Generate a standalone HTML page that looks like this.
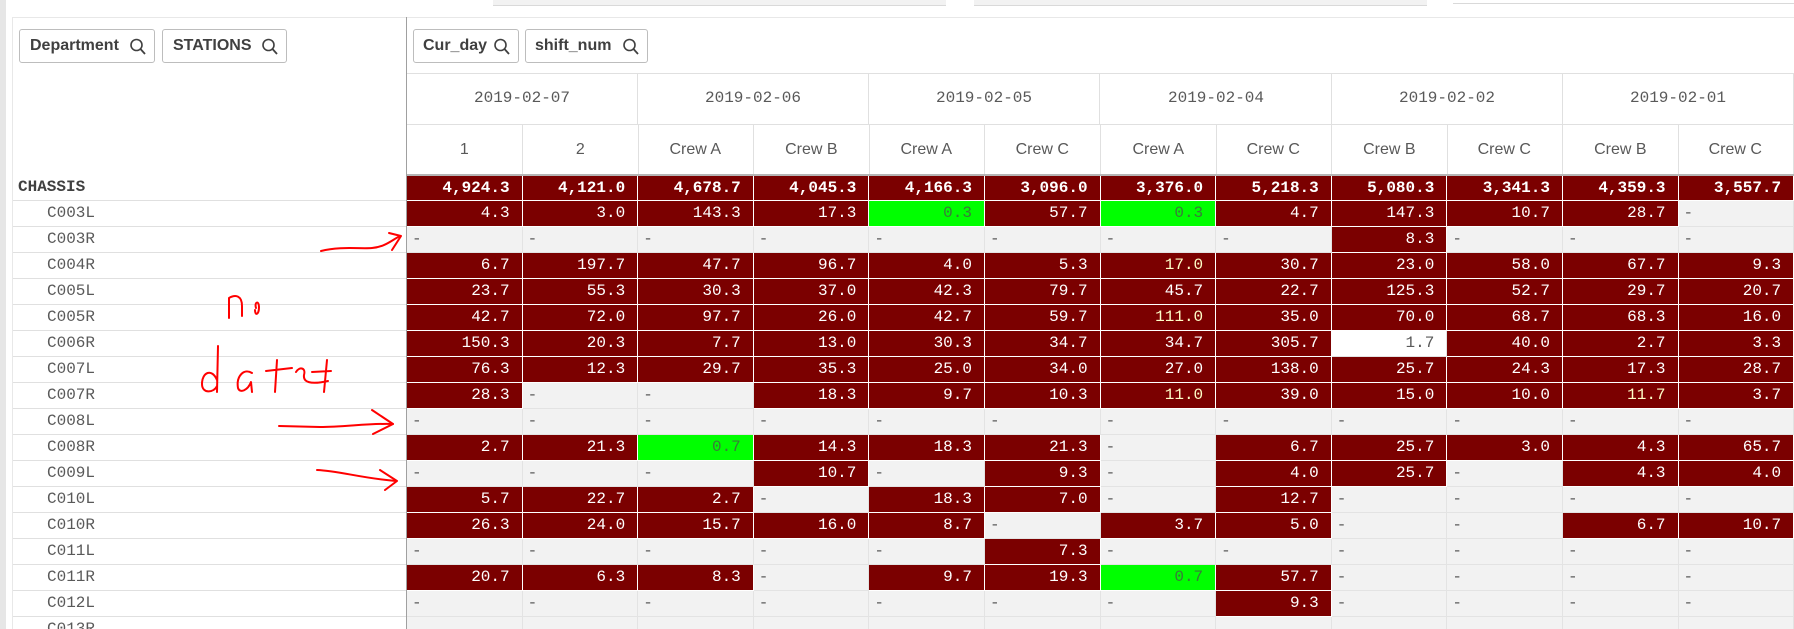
<!DOCTYPE html>
<html><head><meta charset="utf-8"><style>
*{box-sizing:border-box;margin:0;padding:0}
html,body{width:1794px;height:629px;overflow:hidden}
body{background:#fff;position:relative;font-family:"Liberation Mono","DejaVu Sans Mono",monospace;color:#595959}
.strip{position:absolute;left:0;top:0;width:6px;height:629px;background:#e6e6e6}
.bar{position:absolute;top:0;height:6px;background:#f2f2f2;border-bottom:1px solid #d9d9d9}
.panel{position:absolute;left:12px;top:17px;width:1782px;height:612px;border-top:1px solid #e8e8e8;border-left:1px solid #e8e8e8}
.vsep{position:absolute;left:406px;top:17px;width:1px;height:612px;background:#a0a0a0;z-index:2}
.btn{position:absolute;top:29px;height:34px;border:1px solid #bdbdbd;border-radius:3px;font-family:"Liberation Sans",sans-serif;font-weight:bold;font-size:16px;color:#404040;line-height:32px;padding-left:10px}
.btn svg{position:absolute;right:8px;top:8px}
.hline{position:absolute;left:407px;width:1387px;height:1px;background:#e0e0e0}
.dh{position:absolute;top:73px;height:51px;width:231px;border-right:1px solid #e0e0e0;text-align:center;line-height:51px;font-size:16px}
.ch{position:absolute;top:124px;height:51px;width:115.6px;border-right:1px solid #e0e0e0;text-align:center;line-height:51px;font-family:"Liberation Sans",sans-serif;font-size:16px;color:#595959}
.hdrline{position:absolute;left:407px;top:174px;width:1387px;height:2px;background:#b5b5b5}
.lbl{position:absolute;left:13px;width:393px;height:26px;border-bottom:1px solid #e0e0e0;line-height:25px;font-size:16px;padding-left:34px;color:#595959}
.lbl.b{font-weight:bold;padding-left:5px;color:#404040}
table{position:absolute;left:407px;top:176px;width:1387px;border-collapse:separate;border-spacing:0;table-layout:fixed}
td{height:26px;width:115.6px;border-right:1px solid #fff;border-bottom:1px solid #fff;background:#7b0000;color:#fff;text-align:right;padding:0 12px 0 0;font-size:16px;line-height:25px;white-space:nowrap;overflow:hidden}
td.e{background:#f2f2f2;color:#595959;text-align:left;padding-left:5px;border-color:#e3e3e3}
td.g{background:#00ff00;color:#3a7a3a}
td.w{background:#fff;color:#595959;border-color:#e3e3e3}
td.y{color:#ffffc8}
tr.t td{font-weight:bold;height:25px;line-height:24px}
</style></head><body>
<div class="strip"></div>
<div class="bar" style="left:493px;width:453px"></div>
<div class="bar" style="left:974px;width:453px"></div>
<div class="bar" style="left:1453px;width:341px;height:4px;background:#fff"></div>
<div class="panel"></div>
<div class="vsep"></div>

<div class="btn" style="left:19px;width:136px">Department<svg width="16" height="18" viewBox="0 0 16 18"><circle cx="6.5" cy="7" r="5.5" fill="none" stroke="#404040" stroke-width="1.6"/><path d="M10.5 11 L15 16" stroke="#404040" stroke-width="1.8"/></svg></div>
<div class="btn" style="left:162px;width:125px">STATIONS<svg width="16" height="18" viewBox="0 0 16 18"><circle cx="6.5" cy="7" r="5.5" fill="none" stroke="#404040" stroke-width="1.6"/><path d="M10.5 11 L15 16" stroke="#404040" stroke-width="1.8"/></svg></div>
<div class="btn" style="left:413px;width:106px;padding-left:9px">Cur_day<svg width="16" height="18" viewBox="0 0 16 18"><circle cx="6.5" cy="7" r="5.5" fill="none" stroke="#404040" stroke-width="1.6"/><path d="M10.5 11 L15 16" stroke="#404040" stroke-width="1.8"/></svg></div>
<div class="btn" style="left:525px;width:123px;padding-left:9px">shift_num<svg width="16" height="18" viewBox="0 0 16 18"><circle cx="6.5" cy="7" r="5.5" fill="none" stroke="#404040" stroke-width="1.6"/><path d="M10.5 11 L15 16" stroke="#404040" stroke-width="1.8"/></svg></div>

<div class="hline" style="top:73px"></div>
<div class="hline" style="top:124px"></div>
<div class="dh" style="left:407px">2019-02-07</div>
<div class="dh" style="left:638px">2019-02-06</div>
<div class="dh" style="left:869px">2019-02-05</div>
<div class="dh" style="left:1101px">2019-02-04</div>
<div class="dh" style="left:1332px">2019-02-02</div>
<div class="dh" style="left:1563px">2019-02-01</div>
<div class="ch" style="left:407px">1</div>
<div class="ch" style="left:523px">2</div>
<div class="ch" style="left:638px">Crew A</div>
<div class="ch" style="left:754px">Crew B</div>
<div class="ch" style="left:869px">Crew A</div>
<div class="ch" style="left:985px">Crew C</div>
<div class="ch" style="left:1101px">Crew A</div>
<div class="ch" style="left:1216px">Crew C</div>
<div class="ch" style="left:1332px">Crew B</div>
<div class="ch" style="left:1447px">Crew C</div>
<div class="ch" style="left:1563px">Crew B</div>
<div class="ch" style="left:1678px">Crew C</div>
<div class="hdrline"></div>

<div class="lbl b" style="top:175px">CHASSIS</div>
<div class="lbl" style="top:201px">C003L</div>
<div class="lbl" style="top:227px">C003R</div>
<div class="lbl" style="top:253px">C004R</div>
<div class="lbl" style="top:279px">C005L</div>
<div class="lbl" style="top:305px">C005R</div>
<div class="lbl" style="top:331px">C006R</div>
<div class="lbl" style="top:357px">C007L</div>
<div class="lbl" style="top:383px">C007R</div>
<div class="lbl" style="top:409px">C008L</div>
<div class="lbl" style="top:435px">C008R</div>
<div class="lbl" style="top:461px">C009L</div>
<div class="lbl" style="top:487px">C010L</div>
<div class="lbl" style="top:513px">C010R</div>
<div class="lbl" style="top:539px">C011L</div>
<div class="lbl" style="top:565px">C011R</div>
<div class="lbl" style="top:591px">C012L</div>
<div class="lbl" style="top:617px">C013R</div>

<table>
<tr class="t"><td>4,924.3</td><td>4,121.0</td><td>4,678.7</td><td>4,045.3</td><td>4,166.3</td><td>3,096.0</td><td>3,376.0</td><td>5,218.3</td><td>5,080.3</td><td>3,341.3</td><td>4,359.3</td><td>3,557.7</td></tr>
<tr><td>4.3</td><td>3.0</td><td>143.3</td><td>17.3</td><td class="g">0.3</td><td>57.7</td><td class="g">0.3</td><td>4.7</td><td>147.3</td><td>10.7</td><td>28.7</td><td class="e">-</td></tr>
<tr><td class="e">-</td><td class="e">-</td><td class="e">-</td><td class="e">-</td><td class="e">-</td><td class="e">-</td><td class="e">-</td><td class="e">-</td><td>8.3</td><td class="e">-</td><td class="e">-</td><td class="e">-</td></tr>
<tr><td>6.7</td><td>197.7</td><td>47.7</td><td>96.7</td><td>4.0</td><td>5.3</td><td class="y">17.0</td><td>30.7</td><td>23.0</td><td>58.0</td><td>67.7</td><td>9.3</td></tr>
<tr><td>23.7</td><td>55.3</td><td>30.3</td><td>37.0</td><td>42.3</td><td>79.7</td><td>45.7</td><td>22.7</td><td>125.3</td><td>52.7</td><td>29.7</td><td>20.7</td></tr>
<tr><td>42.7</td><td>72.0</td><td>97.7</td><td>26.0</td><td>42.7</td><td>59.7</td><td class="y">111.0</td><td>35.0</td><td>70.0</td><td>68.7</td><td>68.3</td><td>16.0</td></tr>
<tr><td>150.3</td><td>20.3</td><td>7.7</td><td>13.0</td><td>30.3</td><td>34.7</td><td>34.7</td><td>305.7</td><td class="w">1.7</td><td>40.0</td><td>2.7</td><td>3.3</td></tr>
<tr><td>76.3</td><td>12.3</td><td>29.7</td><td>35.3</td><td>25.0</td><td>34.0</td><td>27.0</td><td>138.0</td><td>25.7</td><td>24.3</td><td>17.3</td><td>28.7</td></tr>
<tr><td>28.3</td><td class="e">-</td><td class="e">-</td><td>18.3</td><td>9.7</td><td>10.3</td><td class="y">11.0</td><td>39.0</td><td>15.0</td><td>10.0</td><td class="y">11.7</td><td>3.7</td></tr>
<tr><td class="e">-</td><td class="e">-</td><td class="e">-</td><td class="e">-</td><td class="e">-</td><td class="e">-</td><td class="e">-</td><td class="e">-</td><td class="e">-</td><td class="e">-</td><td class="e">-</td><td class="e">-</td></tr>
<tr><td>2.7</td><td>21.3</td><td class="g">0.7</td><td>14.3</td><td>18.3</td><td>21.3</td><td class="e">-</td><td>6.7</td><td>25.7</td><td>3.0</td><td>4.3</td><td>65.7</td></tr>
<tr><td class="e">-</td><td class="e">-</td><td class="e">-</td><td>10.7</td><td class="e">-</td><td>9.3</td><td class="e">-</td><td>4.0</td><td>25.7</td><td class="e">-</td><td>4.3</td><td>4.0</td></tr>
<tr><td>5.7</td><td>22.7</td><td>2.7</td><td class="e">-</td><td>18.3</td><td>7.0</td><td class="e">-</td><td>12.7</td><td class="e">-</td><td class="e">-</td><td class="e">-</td><td class="e">-</td></tr>
<tr><td>26.3</td><td>24.0</td><td>15.7</td><td>16.0</td><td>8.7</td><td class="e">-</td><td>3.7</td><td>5.0</td><td class="e">-</td><td class="e">-</td><td>6.7</td><td>10.7</td></tr>
<tr><td class="e">-</td><td class="e">-</td><td class="e">-</td><td class="e">-</td><td class="e">-</td><td>7.3</td><td class="e">-</td><td class="e">-</td><td class="e">-</td><td class="e">-</td><td class="e">-</td><td class="e">-</td></tr>
<tr><td>20.7</td><td>6.3</td><td>8.3</td><td class="e">-</td><td>9.7</td><td>19.3</td><td class="g">0.7</td><td>57.7</td><td class="e">-</td><td class="e">-</td><td class="e">-</td><td class="e">-</td></tr>
<tr><td class="e">-</td><td class="e">-</td><td class="e">-</td><td class="e">-</td><td class="e">-</td><td class="e">-</td><td class="e">-</td><td>9.3</td><td class="e">-</td><td class="e">-</td><td class="e">-</td><td class="e">-</td></tr>
<tr><td class="e"></td><td class="e"></td><td class="e"></td><td class="e"></td><td class="e"></td><td class="e"></td><td class="e"></td><td class="e"></td><td class="e"></td><td class="e"></td><td class="e"></td><td class="e"></td></tr>
</table>

<svg style="position:absolute;left:0;top:0;z-index:3" width="1794" height="629" viewBox="0 0 1794 629" fill="none" stroke="#ff0000" stroke-width="2" stroke-linecap="round" stroke-linejoin="round">
<path d="M321 251 C340 246 360 249 372 248 C385 247 392 240 400 236"/>
<path d="M389 233 L401 236 L392 250"/>
<path d="M229 318 L229 298 C236 294 242 296 242 306 L242 316"/>
<path d="M256 308 C254 302 259 300 259 307 C259 315 255 316 255 310"/>
<path d="M218 346 L217 392 M217 380 C212 368 202 372 202 384 C202 394 214 393 217 386"/>
<path d="M252 373 C244 368 236 376 238 388 C240 394 248 390 251 382 L252 392"/>
<path d="M277 360 L275 392 M266 371 L292 368"/>
<path d="M327 360 L324 392 M312 372 L331 371"/>
<path d="M296 372 C300 366 306 368 304 375 C303 382 310 385 328 381"/>
<path d="M279 426 L320 427 C345 427 370 423 393 424"/>
<path d="M372 410 L393 424 L373 434"/>
<path d="M317 470 C340 471 360 478 396 481"/>
<path d="M380 470 L397 481 L385 490"/>
</svg>
</body></html>
